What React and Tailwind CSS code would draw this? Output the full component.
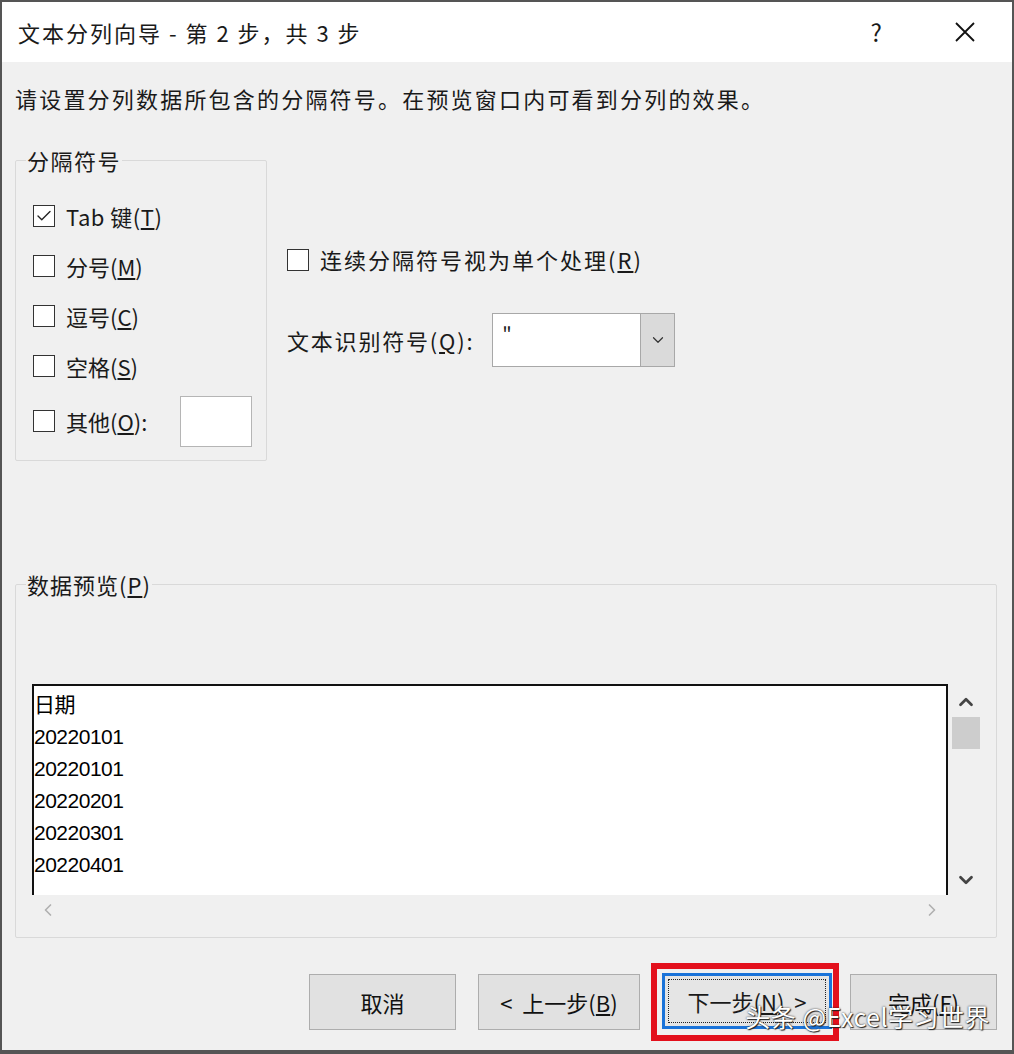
import { Check, ChevronDown, ChevronUp, ChevronLeft, ChevronRight } from 'lucide-react';

const FONT = { fontFamily: '"Noto Sans CJK SC", "Noto Sans", sans-serif' };

function Box({ checked }) {
  return (
    <span className="w-[22px] h-[22px] shrink-0 border-[1.5px] border-[#333] bg-white flex items-center justify-center">
      {checked && <Check size={18} strokeWidth={1.8} className="text-[#222]" />}
    </span>
  );
}

// label with underlined access key, e.g. 分号(M)
function Label({ text, hot, tail = '' }) {
  return (
    <span>
      {text}(<span className="underline underline-offset-2">{hot}</span>){tail}
    </span>
  );
}

function CheckRow({ checked, children, className = '' }) {
  return (
    <div className={`flex items-center gap-[11px] ${className}`}>
      <Box checked={checked} />
      {children}
    </div>
  );
}

function Button({ children, className = '' }) {
  return (
    <div className={`h-[56px] flex items-center justify-center bg-[#e1e1e1] border border-[#adadad] text-[22px] text-[#111] ${className}`}>
      {children}
    </div>
  );
}

export default function App() {
  const rows = ['日期', '20220101', '20220101', '20220201', '20220301', '20220401'];

  return (
    <div className="w-[1014px] h-[1054px] bg-[#f0f0f0] border-x-[2px] border-t-[2px] border-b-[4px] border-[#555] flex flex-col text-[#1a1a1a] overflow-hidden" style={FONT}>
      {/* title bar */}
      <div className="h-[60px] bg-white flex items-center pl-[16px] shrink-0">
        <span className="text-[22px] tracking-[2px]">文本分列向导 - 第 2 步，共 3 步</span>
        <span className="ml-auto text-[24px] mr-[72px]">?</span>
        <svg width="22" height="22" viewBox="0 0 22 22" className="mr-[36px]">
          <path d="M2 2 L20 20 M20 2 L2 20" stroke="#111" strokeWidth="1.8" />
        </svg>
      </div>

      <div className="flex-1 flex flex-col pl-[13px] pr-[15px]">
        <p className="mt-[20px] text-[22px] leading-[32px] tracking-[2.2px]">请设置分列数据所包含的分隔符号。在预览窗口内可看到分列的效果。</p>

        <div className="flex mt-[31px]">
          <fieldset className="w-[252px] h-[316px] border border-[#d9d9d9] rounded-[2px]">
            <legend className="ml-[10px] px-[1px] text-[22px] leading-[30px] tracking-[1.5px]">分隔符号</legend>
            <div className="pl-[17px] pt-[16px] flex flex-col text-[22px]">
              <CheckRow checked className="h-[50px]">
                <span className="tracking-[0.5px]">Tab 键(<span className="underline underline-offset-2">T</span>)</span>
              </CheckRow>
              <CheckRow className="h-[50px]"><Label text="分号" hot="M" /></CheckRow>
              <CheckRow className="h-[50px]"><Label text="逗号" hot="C" /></CheckRow>
              <CheckRow className="h-[50px]"><Label text="空格" hot="S" /></CheckRow>
              <div className="h-[60px] flex items-center">
                <CheckRow><Label text="其他" hot="O" tail=":" /></CheckRow>
                <div className="ml-auto mr-[14px] w-[72px] h-[51px] bg-white border border-[#b5b5b5]"></div>
              </div>
            </div>
          </fieldset>

          <div className="ml-[20px] pt-[98px] flex flex-col text-[22px]">
            <CheckRow className="tracking-[2px]">
              <Label text="连续分隔符号视为单个处理" hot="R" />
            </CheckRow>
            <div className="mt-[37px] flex items-center">
              <span className="tracking-[1.8px]"><Label text="文本识别符号" hot="Q" tail=":" /></span>
              <div className="ml-[18px] w-[183px] h-[54px] bg-white border border-[#a8a8a8] flex">
                <span className="flex-1 pl-[9px] pt-[10px] text-[20px] leading-none">"</span>
                <div className="w-[34px] bg-[#dadada] border-l border-[#a8a8a8] flex items-center justify-center">
                  <ChevronDown size={18} strokeWidth={1.6} className="text-[#333]" />
                </div>
              </div>
            </div>
          </div>
        </div>

        <fieldset className="mt-[108px] h-[369px] border border-[#d9d9d9] rounded-[2px]">
          <legend className="ml-[10px] px-[1px] text-[22px] leading-[30px] tracking-[1px]">数据预览(<span className="underline underline-offset-2">P</span>)</legend>
          <div className="mt-[85px] ml-[16px] flex">
            <div className="w-[916px] h-[211px] bg-white border-t-[2px] border-l-[2px] border-r-[2px] border-[#111] flex flex-col">
              <div className="h-[205px] pt-[3px] text-[21px] text-black" style={{ fontFamily: '"Liberation Sans", "Noto Sans CJK SC", sans-serif' }}>
                {rows.map((r, i) => (
                  <div key={i} className="h-[32px] leading-[32px] tracking-[-0.5px]">{r}</div>
                ))}
              </div>
            </div>
            <div className="w-[32px] ml-[2px] flex flex-col items-center">
              <ChevronUp size={22} strokeWidth={3} className="mt-[7px] text-[#444]" />
              <div className="mt-[4px] w-[28px] h-[32px] bg-[#cdcdcd]"></div>
              <ChevronDown size={22} strokeWidth={3} className="mt-auto mb-[4px] text-[#444]" />
            </div>
          </div>
          <div className="ml-[16px] w-[916px] h-[30px] flex items-center justify-between px-[6px]">
            <ChevronLeft size={20} strokeWidth={2} className="text-[#b0b0b0]" />
            <ChevronRight size={20} strokeWidth={2} className="text-[#b0b0b0]" />
          </div>
        </fieldset>

        <div className="mt-[25px] flex items-center justify-end relative">
          <Button className="w-[147px]">取消</Button>
          <Button className="ml-[22px] w-[162px]">&lt;&nbsp;&nbsp;上一步(<span className="underline underline-offset-2">B</span>)</Button>
          <div className="ml-[11px] border-[6px] border-[#e3101c] pl-[5px] pr-[1px] pt-[4px] pb-[6px]">
            <div className="w-[170px] h-[56px] border-[3px] border-[#1a73d9] bg-[#e5e5e5] p-[3px]">
              <div className="w-full h-full border-[1.5px] border-dotted border-[#222] flex items-center justify-center text-[22px]">
                下一步(<span className="underline underline-offset-2">N</span>)&nbsp;&nbsp;&gt;
              </div>
            </div>
          </div>
          <Button className="ml-[11px] w-[147px]">完成(<span className="underline underline-offset-2">F</span>)</Button>
          <span
            className="absolute right-[7px] top-[35px] text-[25px] text-white tracking-[0.5px]"
            style={{ textShadow: '0 0 2px #222, 1px 1px 1px #222' }}
          >
            头条 @Excel学习世界
          </span>
        </div>
      </div>
    </div>
  );
}
